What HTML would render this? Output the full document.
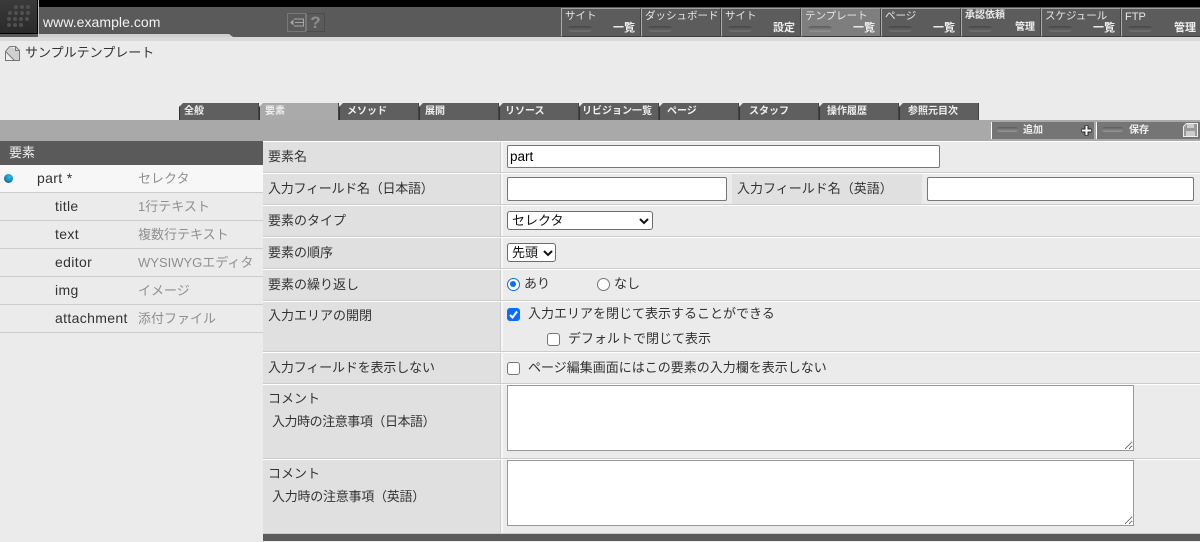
<!DOCTYPE html>
<html lang="ja"><head><meta charset="utf-8"><title>要素</title>
<style>
*{box-sizing:border-box}
html,body{margin:0;padding:0;width:1200px;height:542px;overflow:hidden;background:#ebebeb}
body{position:relative;font:13px/16px "Liberation Sans","Noto Sans CJK JP",sans-serif;color:#333}
.a{position:absolute;white-space:nowrap}
.tb{position:absolute;top:8px;width:80px;height:29px;background:#5c5c5c;border-top:1px solid #a0a0a0;border-left:1px solid #aaa;border-right:1px solid #444;border-bottom:1px solid #3c3c3c;color:#e8e8e8;font-size:10.5px;line-height:12px}
.tb b{position:absolute;right:5px;top:12px;font-size:11px;line-height:14px;font-weight:700;color:#eee}
.tb span{position:absolute;left:3px;top:1px;white-space:nowrap}
.tb i,.pb i{position:absolute;left:6px;top:17px;width:24px;height:6px;border-radius:3px;background:linear-gradient(#484848,#727272)}
.tab{position:absolute;top:103px;width:80px;height:17px;background:#5f5f5f;color:#eee;font-size:10px;font-weight:700;line-height:17px;padding-left:4px;clip-path:polygon(4px 0,100% 0,100% 100%,0 100%,0 4px);border-left:1px solid #333;border-right:1px solid #444}
.pb{position:absolute;top:122px;height:17px;background:#757575;border-left:1px solid #fff;color:#eee;font-size:10px;font-weight:700;line-height:17px}
.pb i{top:5px;left:5px;width:21px;height:5px;background:linear-gradient(#5c5c5c,#989898)}
.li{position:absolute;left:0;width:263px;height:28px;border-bottom:1px solid #ccc;line-height:27px}
.li u{position:absolute;text-decoration:none;color:#333;top:0;font-size:14px;letter-spacing:.35px}
.li s{position:absolute;left:138px;top:0;text-decoration:none;color:#8f8f8f}
.row{position:absolute;left:263px;width:937px;border-bottom:1px solid #ccc;border-top:1px solid #fff}
.lab{position:absolute;left:0;top:0;bottom:0;width:238px;background:#e0e0e0;border-right:1px solid #ccc}
.val{position:absolute;left:240px;top:0;bottom:0;right:0;background:#ebebeb}
.sep{position:absolute;left:238px;top:0;bottom:0;width:2px;background:#f6f6f6}
.t{position:absolute;white-space:nowrap;line-height:16px;color:#333}
input[type=text],textarea{position:absolute;background:#fff;border:1px solid #777;border-radius:2px;margin:0;padding:1px 2px;font:13.5px "Liberation Sans",sans-serif;color:#000;outline:0}
textarea{border-color:#999;border-radius:0;resize:both}
.sel{position:absolute;background:#fff;border:1px solid #6c6c6c;border-radius:3px;color:#111;line-height:17px;padding-left:4px}
.sel svg{position:absolute;top:6px}
.ck{position:absolute;width:13px;height:13px;background:#fff;border:1px solid #777;border-radius:3px}
.ck.on{background:#0a6cff;border-color:#0a6cff}
.ck svg{position:absolute;left:0;top:0}
.ra{position:absolute;width:13px;height:13px;border-radius:50%;background:#fff;border:1px solid #777}
.ra.on{border:1.5px solid #0a6cff}
.ra.on::after{content:"";position:absolute;left:2px;top:2px;width:6px;height:6px;border-radius:50%;background:#0a6cff}
</style></head><body>
<div class="a" style="left:0;top:0;width:1200px;height:7px;background:#000"></div>
<div class="a" style="left:0;top:7px;width:1200px;height:30px;background:#5a5a5a"></div>
<div class="a" style="left:0;top:37px;width:1200px;height:4px;background:#d9d9d9"></div>
<div class="a" style="left:38px;top:34px;width:195px;height:3px;background:#cfcfcf;clip-path:polygon(0 0,98% 0,100% 100%,0 100%)"></div>
<div class="a" style="left:0;top:0;width:38px;height:34px;background:linear-gradient(#3a3a3a,#2a2a2a);border-right:1px solid #000;border-bottom:1px solid #000"></div>
<div class="a" style="left:38px;top:0;width:1px;height:34px;background:#bbb"></div>
<svg class="a" style="left:0;top:0" width="38" height="34" fill="#505050">
<circle cx="16" cy="7" r="2"/><circle cx="22" cy="7" r="2"/><circle cx="28" cy="7" r="2"/>
<circle cx="10" cy="13" r="2"/><circle cx="16" cy="13" r="2"/><circle cx="22" cy="13" r="2"/><circle cx="28" cy="13" r="2"/>
<circle cx="9" cy="19" r="2"/><circle cx="15" cy="19" r="2"/><circle cx="21" cy="19" r="2"/><circle cx="27" cy="19" r="2"/>
<circle cx="9" cy="25" r="2"/><circle cx="15" cy="25" r="2"/><circle cx="21" cy="25" r="2"/></svg>
<div class="a" style="left:43px;top:14px;font-size:14px;letter-spacing:.05px;color:#f2f2f2;line-height:16px">www.example.com</div>
<div class="a" style="left:287px;top:13px;width:19px;height:19px;border:1px solid #777"></div>
<div class="a" style="left:306px;top:13px;width:19px;height:19px;border:1px solid #4c4c4c;border-left:1px solid #777"></div>
<svg class="a" style="left:287px;top:13px" width="19" height="19" fill="none" stroke="#a5a5a5"><path d="M8 9.5h8.5M7 6h9.5v7H7" stroke-width="1"/><path d="M3 9.5l3.5-3v6z" fill="#a5a5a5" stroke="none"/></svg>
<div class="a" style="left:306px;top:13px;width:19px;height:19px;text-align:center;color:#8e8e8e;font:700 17px/19px 'Liberation Sans',sans-serif">?</div>

<div class="tb" style="left:561px"><span>サイト</span><i></i><b>一覧</b></div>
<div class="tb" style="left:641px"><span>ダッシュボード</span><i></i></div>
<div class="tb" style="left:721px"><span>サイト</span><i></i><b>設定</b></div>
<div class="tb" style="left:801px;background:#7e7e7e"><span>テンプレート</span><i style="background:linear-gradient(#5c5c5c,#949494)"></i><b>一覧</b></div>
<div class="tb" style="left:881px"><span>ページ</span><i></i><b>一覧</b></div>
<div class="tb" style="left:961px"><span style="font-weight:700;font-size:10px">承認依頼</span><i></i><b style="font-size:10px">管理</b></div>
<div class="tb" style="left:1041px"><span>スケジュール</span><i></i><b>一覧</b></div>
<div class="tb" style="left:1121px;width:79px;border-right:0"><span style="font-size:11px;top:2px">FTP</span><i></i><b style="right:4px">管理</b></div>

<svg class="a" style="left:4px;top:45px" width="17" height="17" fill="none" stroke="#777"><path d="M5.5 1.5h6l4 4v10h-14v-9" fill="#eee"/><path d="M5.5 1.5l-4 5 9 9h5v-10" fill="#d0d0d0"/><path d="M11.5 1.5v4h4"/></svg>
<div class="a" style="left:25px;top:45px">サンプルテンプレート</div>

<div class="a" style="left:0;top:120px;width:1200px;height:21px;background:#a9a9a9"></div>
<div class="tab" style="left:179px">全般</div>
<div class="tab" style="left:259px;background:#aaa;padding-left:5px">要素</div>
<div class="tab" style="left:339px;padding-left:7px">メソッド</div>
<div class="tab" style="left:419px;padding-left:5px">展開</div>
<div class="tab" style="left:499px;padding-left:5px">リソース</div>
<div class="tab" style="left:579px;padding-left:2px">リビジョン一覧</div>
<div class="tab" style="left:659px;padding-left:7px">ページ</div>
<div class="tab" style="left:739px;padding-left:9px">スタッフ</div>
<div class="tab" style="left:819px;padding-left:7px">操作履歴</div>
<div class="tab" style="left:899px;padding-left:8px">参照元目次</div>

<div class="pb" style="left:991px;width:103px"><i></i><span style="position:absolute;left:31px">追加</span>
<svg style="position:absolute;left:88px;top:2px" width="13" height="13"><path d="M6.5 1.5v10M1.5 6.5h10" stroke="#222" stroke-width="4"/><path d="M6.5 2v9M2 6.5h9" stroke="#fff" stroke-width="2"/></svg></div>
<div class="pb" style="left:1096px;width:104px"><i></i><span style="position:absolute;left:32px">保存</span>
<svg style="position:absolute;left:86px;top:1px" width="15" height="15"><path d="M3.5 .5h11v13h-14v-10z" fill="#999" stroke="#eee"/><path d="M4 1h7v4h-7zM3 8h9v5h-9z" fill="#ccc"/></svg></div>

<!-- left panel -->
<div class="a" style="left:0;top:141px;width:263px;height:24px;background:#5a5a5a;color:#f0f0f0;line-height:23px;padding-left:9px">要素</div>
<div class="li" style="top:165px;background:#f7f7f7"><u style="left:37px">part *</u><s>セレクタ</s></div>
<div class="a" style="left:4px;top:174px;width:9px;height:9px;border-radius:50%;background:radial-gradient(circle at 60% 35%,#2fc1ec,#0a6f9d 75%,#0a4a6b)"></div>
<div class="li" style="top:193px"><u style="left:55px">title</u><s>1行テキスト</s></div>
<div class="li" style="top:221px"><u style="left:55px">text</u><s>複数行テキスト</s></div>
<div class="li" style="top:249px"><u style="left:55px">editor</u><s>WYSIWYGエディタ</s></div>
<div class="li" style="top:277px"><u style="left:55px">img</u><s>イメージ</s></div>
<div class="li" style="top:305px"><u style="left:55px">attachment</u><s>添付ファイル</s></div>

<!-- form -->
<div class="row" style="top:141px;height:32px"><div class="lab"></div><div class="sep"></div><div class="val"></div><div class="t" style="left:5px;top:7px">要素名</div></div>
<div class="row" style="top:173px;height:32px"><div class="lab"></div><div class="sep"></div><div class="val"></div><div class="t" style="left:5px;top:7px;letter-spacing:-.25px">入力フィールド名（日本語）</div>
<div style="position:absolute;left:469px;top:0;bottom:0;width:190px;background:#e0e0e0"></div><div class="t" style="left:474px;top:7px">入力フィールド名（英語）</div></div>
<div class="row" style="top:205px;height:32px"><div class="lab"></div><div class="sep"></div><div class="val"></div><div class="t" style="left:5px;top:7px">要素のタイプ</div></div>
<div class="row" style="top:237px;height:32px"><div class="lab"></div><div class="sep"></div><div class="val"></div><div class="t" style="left:5px;top:7px">要素の順序</div></div>
<div class="row" style="top:269px;height:32px"><div class="lab"></div><div class="sep"></div><div class="val"></div><div class="t" style="left:5px;top:7px">要素の繰り返し</div></div>
<div class="row" style="top:301px;height:51px"><div class="lab"></div><div class="sep"></div><div class="val"></div><div class="t" style="left:5px;top:6px">入力エリアの開閉</div></div>
<div class="row" style="top:352px;height:32px"><div class="lab"></div><div class="sep"></div><div class="val"></div><div class="t" style="left:5px;top:7px;letter-spacing:-.15px">入力フィールドを表示しない</div></div>
<div class="row" style="top:384px;height:75px"><div class="lab"></div><div class="sep"></div><div class="val"></div><div class="t" style="left:5px;top:6px">コメント</div><div class="t" style="left:9px;top:29px;letter-spacing:-.45px">入力時の注意事項（日本語）</div></div>
<div class="row" style="top:459px;height:75px"><div class="lab"></div><div class="sep"></div><div class="val"></div><div class="t" style="left:5px;top:6px">コメント</div><div class="t" style="left:9px;top:29px;letter-spacing:-.25px">入力時の注意事項（英語）</div></div>
<div class="a" style="left:263px;top:534px;width:937px;height:7px;background:#5a5a5a"></div>

<input type="text" value="part" style="left:507px;top:145px;width:433px;height:23px">
<input type="text" style="left:507px;top:177px;width:220px;height:24px">
<input type="text" style="left:927px;top:177px;width:267px;height:24px">
<div class="a sel" style="left:507px;top:211px;width:146px;height:19px">セレクタ<svg style="left:131px" width="10" height="7" fill="none" stroke="#111" stroke-width="2"><path d="M1 1l4 4 4-4"/></svg></div>
<div class="a sel" style="left:507px;top:243px;width:49px;height:19px">先頭<svg style="left:35px" width="10" height="7" fill="none" stroke="#111" stroke-width="2"><path d="M1 1l4 4 4-4"/></svg></div>
<div class="a ra on" style="left:507px;top:278px"></div><div class="a t" style="left:524px;top:276px">あり</div>
<div class="a ra" style="left:597px;top:278px"></div><div class="a t" style="left:614px;top:276px">なし</div>
<div class="a ck on" style="left:507px;top:308px"><svg width="11" height="11" fill="none" stroke="#fff" stroke-width="2"><path d="M2 6l2.5 2.5L9 2.5"/></svg></div><div class="a t" style="left:528px;top:306px">入力エリアを閉じて表示することができる</div>
<div class="a ck" style="left:547px;top:333px"></div><div class="a t" style="left:568px;top:331px">デフォルトで閉じて表示</div>
<div class="a ck" style="left:507px;top:362px"></div><div class="a t" style="left:528px;top:360px">ページ編集画面にはこの要素の入力欄を表示しない</div>
<textarea style="left:507px;top:385px;width:627px;height:66px"></textarea>
<textarea style="left:507px;top:460px;width:627px;height:66px"></textarea>
</body></html>
